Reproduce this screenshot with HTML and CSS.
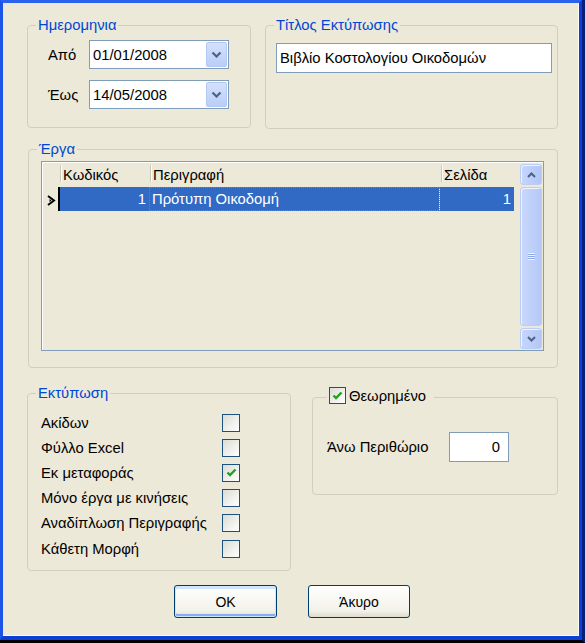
FILE: index.html
```html
<!DOCTYPE html>
<html lang="el">
<head>
<meta charset="utf-8">
<title>Βιβλίο Κοστολογίου</title>
<link rel="stylesheet" href="styles.css">
</head>
<body>
<div class="frame">
  <div class="window">
    <div class="row-top">
      <div class="group g-date">
        <span class="caption">Ημερομηνια</span>
        <div class="date-row">
          <span class="lbl">Από</span>
          <div class="combo"><span class="val">01/01/2008</span><span class="drop"><svg width="11" height="8" viewBox="0 0 11 8"><path d="M1.5 1.5 L5.5 5.5 L9.5 1.5" fill="none" stroke="#4d6185" stroke-width="2.2"/></svg></span></div>
        </div>
        <div class="date-row">
          <span class="lbl">Έως</span>
          <div class="combo"><span class="val">14/05/2008</span><span class="drop"><svg width="11" height="8" viewBox="0 0 11 8"><path d="M1.5 1.5 L5.5 5.5 L9.5 1.5" fill="none" stroke="#4d6185" stroke-width="2.2"/></svg></span></div>
        </div>
      </div>
      <div class="group g-title">
        <span class="caption">Τίτλος Εκτύπωσης</span>
        <div class="textbox">Βιβλίο Κοστολογίου Οικοδομών</div>
      </div>
    </div>

    <div class="group g-works">
      <span class="caption">Έργα</span>
      <div class="grid">
        <div class="grid-main">
          <div class="g-head">
            <span class="c-ind"></span>
            <span class="c-code">Κωδικός</span>
            <span class="c-desc">Περιγραφή</span>
            <span class="c-page">Σελίδα</span>
          </div>
          <div class="g-row">
            <span class="c-ind"><svg width="10" height="11" viewBox="0 0 10 11"><path d="M1 1 L7 5.5 L1 10" fill="none" stroke="#000" stroke-width="2"/><path d="M2.5 4 L4.5 5.5 L2.5 7" fill="#000"/></svg></span>
            <span class="c-code sel num">1</span>
            <span class="c-desc sel focus">Πρότυπη Οικοδομή</span>
            <span class="c-page sel num">1</span>
          </div>
        </div>
        <div class="vscroll">
          <span class="sbtn"><svg width="9" height="6" viewBox="0 0 9 6"><path d="M1 5 L4.5 1.5 L8 5" fill="none" stroke="#4d6185" stroke-width="2"/></svg></span>
          <span class="thumb"><span class="grip"></span></span>
          <span class="sbtn"><svg width="9" height="6" viewBox="0 0 9 6"><path d="M1 1 L4.5 4.5 L8 1" fill="none" stroke="#4d6185" stroke-width="2"/></svg></span>
        </div>
      </div>
    </div>

    <div class="row-bottom">
      <div class="group g-print">
        <span class="caption">Εκτύπωση</span>
        <div class="opts">
          <span class="opt">Ακίδων</span><span class="cb"></span>
          <span class="opt">Φύλλο Excel</span><span class="cb"></span>
          <span class="opt">Εκ μεταφοράς</span><span class="cb checked"><svg width="11" height="9" viewBox="0 0 11 9"><path d="M1.5 4.5 L4 7 L9.5 1.5" fill="none" stroke="#21a121" stroke-width="2.4"/></svg></span>
          <span class="opt">Μόνο έργα με κινήσεις</span><span class="cb"></span>
          <span class="opt">Αναδίπλωση Περιγραφής</span><span class="cb"></span>
          <span class="opt">Κάθετη Μορφή</span><span class="cb"></span>
        </div>
      </div>
      <div class="group g-view">
        <span class="caption cap-check"><span class="cb small checked"><svg width="11" height="9" viewBox="0 0 11 9"><path d="M1.5 4.5 L4 7 L9.5 1.5" fill="none" stroke="#21a121" stroke-width="2.4"/></svg></span>Θεωρημένο</span>
        <div class="margin-row">
          <span class="lbl2">Άνω Περιθώριο</span>
          <div class="numbox">0</div>
        </div>
      </div>
    </div>

    <div class="buttons">
      <button class="btn default">OK</button>
      <button class="btn">Άκυρο</button>
    </div>
  </div>
</div>
</body>
</html>
```

FILE: styles.css
```css
* { box-sizing: border-box; }
html, body { margin: 0; padding: 0; background: #000; }
body {
  font-family: "Liberation Sans", Arial, sans-serif;
  font-size: 14.8px;
  color: #000;
}
.frame {
  width: 585px;
  height: 643px;
  border-right: 3px solid #0a1e7a;
  border-bottom: 3px solid #000;
  background: #000;
}
.window {
  width: 582px;
  height: 640px;
  background: #ece9d8;
  border-left: 3px solid #1a55e8;
  border-top: 3px solid #2a62ee;
  border-right: 3px solid #0b3fd8;
  border-bottom: 4px solid #0b3fd8;
  box-shadow: inset -1px -1px 0 #fffbf0;
  padding: 22px 0 0 24px;
}
.group {
  position: relative;
  border: 1px solid #d0d0bf;
  border-radius: 4px;
}
.caption {
  position: absolute;
  top: -9px;
  left: 8px;
  padding: 0 2px;
  background: #ece9d8;
  color: #0046d5;
  line-height: 16px;
  white-space: nowrap;
}
.row-top { display: flex; gap: 14px; align-items: flex-start; }
.g-date { width: 224px; height: 103px; padding: 14px 0 0 20px; display: flex; flex-direction: column; gap: 11px; }
.g-title { width: 293px; height: 104px; padding: 17px 0 0 10px; }
.date-row { display: flex; align-items: center; }
.lbl { width: 41px; }
.combo {
  width: 140px; height: 29px;
  background: #fff;
  border: 1px solid #7f9db9;
  display: flex; align-items: center; justify-content: space-between;
  padding: 0 1px 0 3px;
}
.drop {
  width: 21px; height: 25px;
  border-radius: 2px;
  border: 1px solid #b4c8f6;
  background: linear-gradient(#d5e1fc, #b9cdf8);
  display: flex; align-items: center; justify-content: center;
}
.textbox {
  width: 276px; height: 30px;
  background: #fff;
  border: 1px solid #7f9db9;
  padding: 0 3px;
  line-height: 28px;
  white-space: nowrap;
}
.g-works { width: 530px; height: 219px; margin: 20px 0 0 1px; padding: 11px 0 0 12px; }
.grid {
  width: 503px; height: 190px;
  border: 1px solid #7f9db9;
  box-shadow: inset 1px 1px 0 #fff;
  display: flex;
  padding: 1px 0 0 1px;
}
.grid-main { width: 476px; }
.g-head, .g-row { display: flex; height: 24px; }
.g-head span {
  border-left: 1px solid transparent;
  line-height: 24px;
  padding-left: 2px;
  position: relative;
}
.g-head span + span::before {
  content: "";
  position: absolute;
  left: -1px; top: 2px; bottom: 5px;
  width: 1px;
  background: #c9c7ba;
  box-shadow: 1px 0 0 #fff;
}
.c-ind { width: 17px; flex: none; }
.c-code { width: 90px; flex: none; }
.c-desc { width: 291px; flex: none; }
.c-page { width: 74px; flex: none; }
.g-row .c-ind {
  display: flex; align-items: center; justify-content: center;
  border-right: 2px solid #000;
  padding-left: 2px;
}
.g-row .c-ind svg { margin-top: 3px; }
.sel { background: #316ac5; color: #fff; line-height: 24px; padding: 0 3px; white-space: nowrap; }
.g-row .c-code { width: 89px; }
.num { text-align: right; }
.focus { outline: 1px dotted #a08030; outline-offset: -1px; border-right: 1px solid #ece9d8; }
.vscroll {
  width: 22px;
  margin-left: 1px;
  height: 186px;
  display: flex; flex-direction: column; gap: 2px;
  padding-top: 1px;
}
.sbtn {
  height: 21px;
  border: 1px solid #bbcdf5;
  border-radius: 3px;
  background: linear-gradient(90deg, #c6d6fc, #b3c7f5);
  display: flex; align-items: center; justify-content: center;
  box-shadow: inset 1px 1px 0 #eef3ff;
}
.thumb {
  flex: 1;
  border: 1px solid #bbcdf5;
  border-radius: 3px;
  background: linear-gradient(90deg, #c9d8fc, #b5c9f6);
  box-shadow: inset 1px 1px 0 #eef3ff;
  display: flex; align-items: center; justify-content: center;
}
.grip {
  width: 7px; height: 7px;
  background: repeating-linear-gradient(#eef3ff 0 1px, #8da8e8 1px 2px);
}
.row-bottom { display: flex; gap: 21px; align-items: flex-start; margin-top: 25px; }
.g-print { width: 264px; height: 178px; padding: 16px 0 0 13px; }
.opts {
  display: grid;
  grid-template-columns: 181px 18px;
  grid-auto-rows: 25.2px;
  align-items: center;
}
.opt { white-space: nowrap; line-height: 18px; }
.cb {
  width: 18px; height: 18px;
  border: 1px solid #1c5180;
  background: linear-gradient(135deg, #dcdcd4, #ffffff);
  display: flex; align-items: center; justify-content: center;
}
.cb.small { width: 17px; height: 17px; margin-right: 3px; }
.g-view { width: 246px; height: 98px; margin-top: 4px; padding: 34px 0 0 14px; }
.cap-check { display: flex; align-items: center; top: -11px; left: 14px; padding-right: 8px; color: #000; }
.margin-row { display: flex; align-items: center; }
.lbl2 { width: 122px; }
.numbox {
  width: 60px; height: 30px;
  background: #fff;
  border: 1px solid #7f9db9;
  text-align: right;
  padding-right: 8px;
  line-height: 28px;
}
.buttons { display: flex; gap: 31px; margin: 14px 0 0 147px; }
.btn {
  font: inherit;
  font-size: 14px;
  width: 103px; height: 33px;
  border: 1px solid #003c74;
  border-radius: 3px;
  background: linear-gradient(#ffffff, #f2f1ea 80%, #dedbcd);
  color: #000;
  padding: 0;
}
.btn + .btn { width: 102px; }
.btn.default { box-shadow: inset 0 0 0 1px #cee7ff, inset 0 -2px 0 1px #89adeb, inset 0 2px 0 1px #cee7ff; }
```
